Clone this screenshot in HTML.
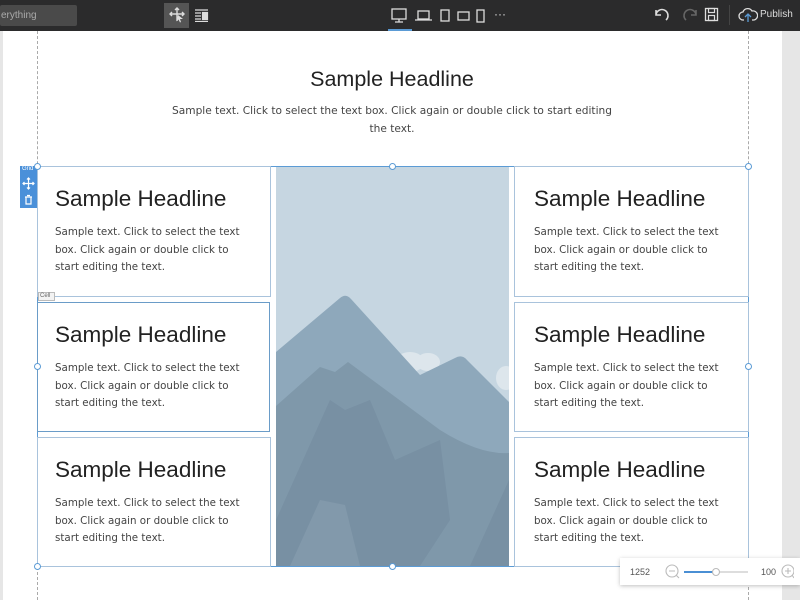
<!DOCTYPE html>
<html><head><meta charset="utf-8"><style>
*{margin:0;padding:0;box-sizing:border-box}
body{width:800px;height:600px;overflow:hidden;background:#fff;font-family:"Liberation Sans",sans-serif;position:relative}
.tb{position:absolute;left:0;top:0;width:800px;height:31px;background:#2b2b2c}
.abs{position:absolute}
.cell{position:absolute;border:1px solid #a9c3dc;background:#fff}
.cell h2{position:absolute;left:17px;top:19px;font-weight:400;font-size:22.5px;color:#222;font-family:"Liberation Sans",sans-serif;white-space:nowrap}
.cell p{position:absolute;left:17px;top:57px;font-size:10.3px;line-height:17.7px;color:#444;font-family:"DejaVu Sans",sans-serif;width:190px}
.r h2,.r p{left:19px}
.h{position:absolute;width:7px;height:7px;border:1px solid #5b9bd5;border-radius:50%;background:#fff}
</style></head><body>
<div class="tb">
 <div class="abs" style="left:0;top:5px;width:77px;height:21px;background:#4a4a4a;border-radius:2px;color:#aaa;font-size:10px;line-height:21px;padding-left:1px">erything</div>
 <div class="abs" style="left:164px;top:3px;width:25px;height:25px;background:#555"></div>
 <svg class="abs" style="left:168px;top:6px" width="18" height="18" viewBox="0 0 18 18" fill="none" stroke="#ddd" stroke-width="1.4"><path d="M9 2v13M2 8h13M7 4l2-2 2 2M4 6l-2 2 2 2M14 6l2 2-2 2"/><path d="M10 9l5 4h-3l1 3-1 .5-1.5-3-2 2z" fill="#ddd" stroke="none"/></svg>
 <svg class="abs" style="left:194px;top:9px" width="15" height="13" viewBox="0 0 15 13" fill="none" stroke="#ddd" stroke-width="1.2"><path d="M1 1h13M1 4h6M1 7h6M1 10h6M1 12.5h13"/><rect x="8.5" y="3.5" width="5" height="7" fill="#ddd"/></svg>
 <svg class="abs" style="left:390px;top:7px" width="120" height="18" viewBox="0 0 120 18" fill="none" stroke="#ddd" stroke-width="1.3"><rect x="2" y="2" width="14" height="10"/><path d="M9 12v3M5 15h8"/><rect x="28" y="4" width="11" height="8"/><path d="M25 13h17"/><rect x="51" y="3" width="8" height="11"/><rect x="68" y="5" width="11" height="8"/><rect x="87" y="3" width="7" height="12"/></svg>
 <div class="abs" style="left:494px;top:7px;color:#ddd;font-size:12px">···</div>
 <div class="abs" style="left:388px;top:29px;width:24px;height:2px;background:#5b9bd5"></div>
 <svg class="abs" style="left:652px;top:6px" width="70" height="18" viewBox="0 0 70 18" fill="none" stroke-width="1.6"><path d="M4 4v5h5M4 9a6 6 0 1 1 10 5" stroke="#ddd"/><path d="M44 4v5h-5M44 9a6 6 0 1 0 -10 5" stroke="#666"/><rect x="53.5" y="2.5" width="12" height="12" stroke="#ddd" stroke-width="1.3"/><rect x="56.5" y="2.5" width="6" height="4" stroke="#ddd" stroke-width="1.2"/><rect x="56.5" y="9.5" width="6" height="5" stroke="#ddd" stroke-width="1.2"/></svg>
 <div class="abs" style="left:729px;top:5px;width:1px;height:20px;background:#444"></div>
 <svg class="abs" style="left:738px;top:6px" width="20" height="18" viewBox="0 0 20 18" fill="none" stroke="#ddd" stroke-width="1.3"><path d="M6 14H5a4 4 0 0 1 0-8 5 5 0 0 1 9-1 4 4 0 0 1 2 9h-2"/><path d="M10 16V8M7 11l3-3 3 3" stroke="#5b9bd5"/></svg>
 <div class="abs" style="left:760px;top:9px;color:#ddd;font-size:10px">Publish</div>
</div>
<div class="abs" style="left:0;top:31px;width:3px;height:569px;background:#e6e6e6"></div>
<div class="abs" style="left:782px;top:31px;width:18px;height:569px;background:#e6e6e6"></div>
<div class="abs" style="left:37px;top:31px;height:569px;border-left:1px dashed #aaa"></div>
<div class="abs" style="left:748px;top:31px;height:569px;border-left:1px dashed #aaa"></div>
<div class="abs" style="left:0;top:67px;width:784px;text-align:center;font-size:21.5px;color:#222;font-family:'Liberation Sans',sans-serif">Sample Headline</div>
<div class="abs" style="left:172px;top:103px;width:440px;text-align:center;font-size:10.6px;line-height:17.5px;color:#444;font-family:'DejaVu Sans',sans-serif">Sample text. Click to select the text box. Click again or double click to start editing the text.</div>

<div class="abs" style="left:37px;top:166px;width:712px;height:401px;border:1px solid #5b9bd5"></div>
<div class="cell" style="left:37px;top:166px;width:234px;height:131px"><h2>Sample Headline</h2><p>Sample text. Click to select the text box. Click again or double click to start editing the text.</p></div>
<div class="cell" style="left:37px;top:302px;width:233px;height:130px;border-color:#6a9cc8"><h2>Sample Headline</h2><p>Sample text. Click to select the text box. Click again or double click to start editing the text.</p></div>
<div class="cell" style="left:37px;top:437px;width:234px;height:130px"><h2>Sample Headline</h2><p>Sample text. Click to select the text box. Click again or double click to start editing the text.</p></div>
<div class="cell r" style="left:514px;top:166px;width:235px;height:131px"><h2>Sample Headline</h2><p>Sample text. Click to select the text box. Click again or double click to start editing the text.</p></div>
<div class="cell r" style="left:514px;top:302px;width:235px;height:130px"><h2>Sample Headline</h2><p>Sample text. Click to select the text box. Click again or double click to start editing the text.</p></div>
<div class="cell r" style="left:514px;top:437px;width:235px;height:130px"><h2>Sample Headline</h2><p>Sample text. Click to select the text box. Click again or double click to start editing the text.</p></div>

<svg class="abs" style="left:276px;top:167px" width="233" height="399" viewBox="276 167 233 399">
 <rect x="276" y="167" width="233" height="399" fill="#c6d6e1"/>
 <ellipse cx="410" cy="362" rx="14" ry="10" fill="#dde6ec"/>
 <ellipse cx="428" cy="362" rx="12" ry="9" fill="#dde6ec"/>
 <ellipse cx="506" cy="378" rx="10" ry="12" fill="#dde6ec"/>
 <path d="M276 352 L340 298 Q346 293 351 299 L420 375 L455 358 Q462 354 467 360 L509 402 V566 H276Z" fill="#8ea8bb"/>
 <path d="M276 406 L320 367 L335 372 L348 362 L440 430 Q480 455 509 453 V566 H276Z" fill="#7f98aa"/>
 <path d="M276 520 L330 400 L345 410 L370 400 L395 460 L440 440 L450 520 L420 566 H276Z M470 566 L509 480 V566Z" fill="#7890a3"/>
 <path d="M290 566 L320 500 L345 505 L360 566Z" fill="#8299ab"/>
</svg>

<div class="abs" style="left:20px;top:166px;width:17px;height:42px;background:#4a90d9"></div>
<div class="abs" style="left:22px;top:166px;color:#fff;font-size:6px">Grid</div>
<svg class="abs" style="left:22px;top:177px" width="13" height="30" viewBox="0 0 13 30" fill="none" stroke="#fff" stroke-width="1.2"><path d="M6.5 1v11M1 6.5h11M5 2.5l1.5-1.5 1.5 1.5M5 10.5l1.5 1.5 1.5-1.5M2.5 5l-1.5 1.5 1.5 1.5M10.5 5l1.5 1.5-1.5 1.5"/><path d="M3 20h7M5 18.5h3M4 20v7h5v-7"/></svg>
<div class="abs" style="left:38px;top:292px;width:17px;height:9px;border:1px solid #bbb;background:#f3f3f3;font-size:6px;color:#666;padding-left:1px;line-height:7px">Cell</div>
<div class="h" style="left:34px;top:163px"></div><div class="h" style="left:389px;top:163px"></div><div class="h" style="left:745px;top:163px"></div>
<div class="h" style="left:34px;top:363px"></div><div class="h" style="left:745px;top:363px"></div>
<div class="h" style="left:34px;top:563px"></div><div class="h" style="left:389px;top:563px"></div>

<div class="abs" style="left:620px;top:558px;width:180px;height:27px;background:#fff;box-shadow:0 1px 4px rgba(0,0,0,.25)"></div>
<div class="abs" style="left:630px;top:567px;font-size:9px;color:#555">1252</div>
<svg class="abs" style="left:664px;top:563px" width="130" height="18" viewBox="0 0 130 18" fill="none" stroke="#bbb" stroke-width="1.1"><circle cx="8" cy="8" r="6"/><path d="M5 8h6M12 12l3 3"/><path d="M20 9h64" stroke="#ddd" stroke-width="2"/><path d="M20 9h32" stroke="#4a8fd4" stroke-width="2"/><circle cx="52" cy="9" r="3.5" fill="#fff"/><circle cx="124" cy="8" r="6"/><path d="M121 8h6M124 5v6M128 12l2 3"/></svg>
<div class="abs" style="left:761px;top:567px;font-size:9px;color:#555">100</div>
</body></html>
